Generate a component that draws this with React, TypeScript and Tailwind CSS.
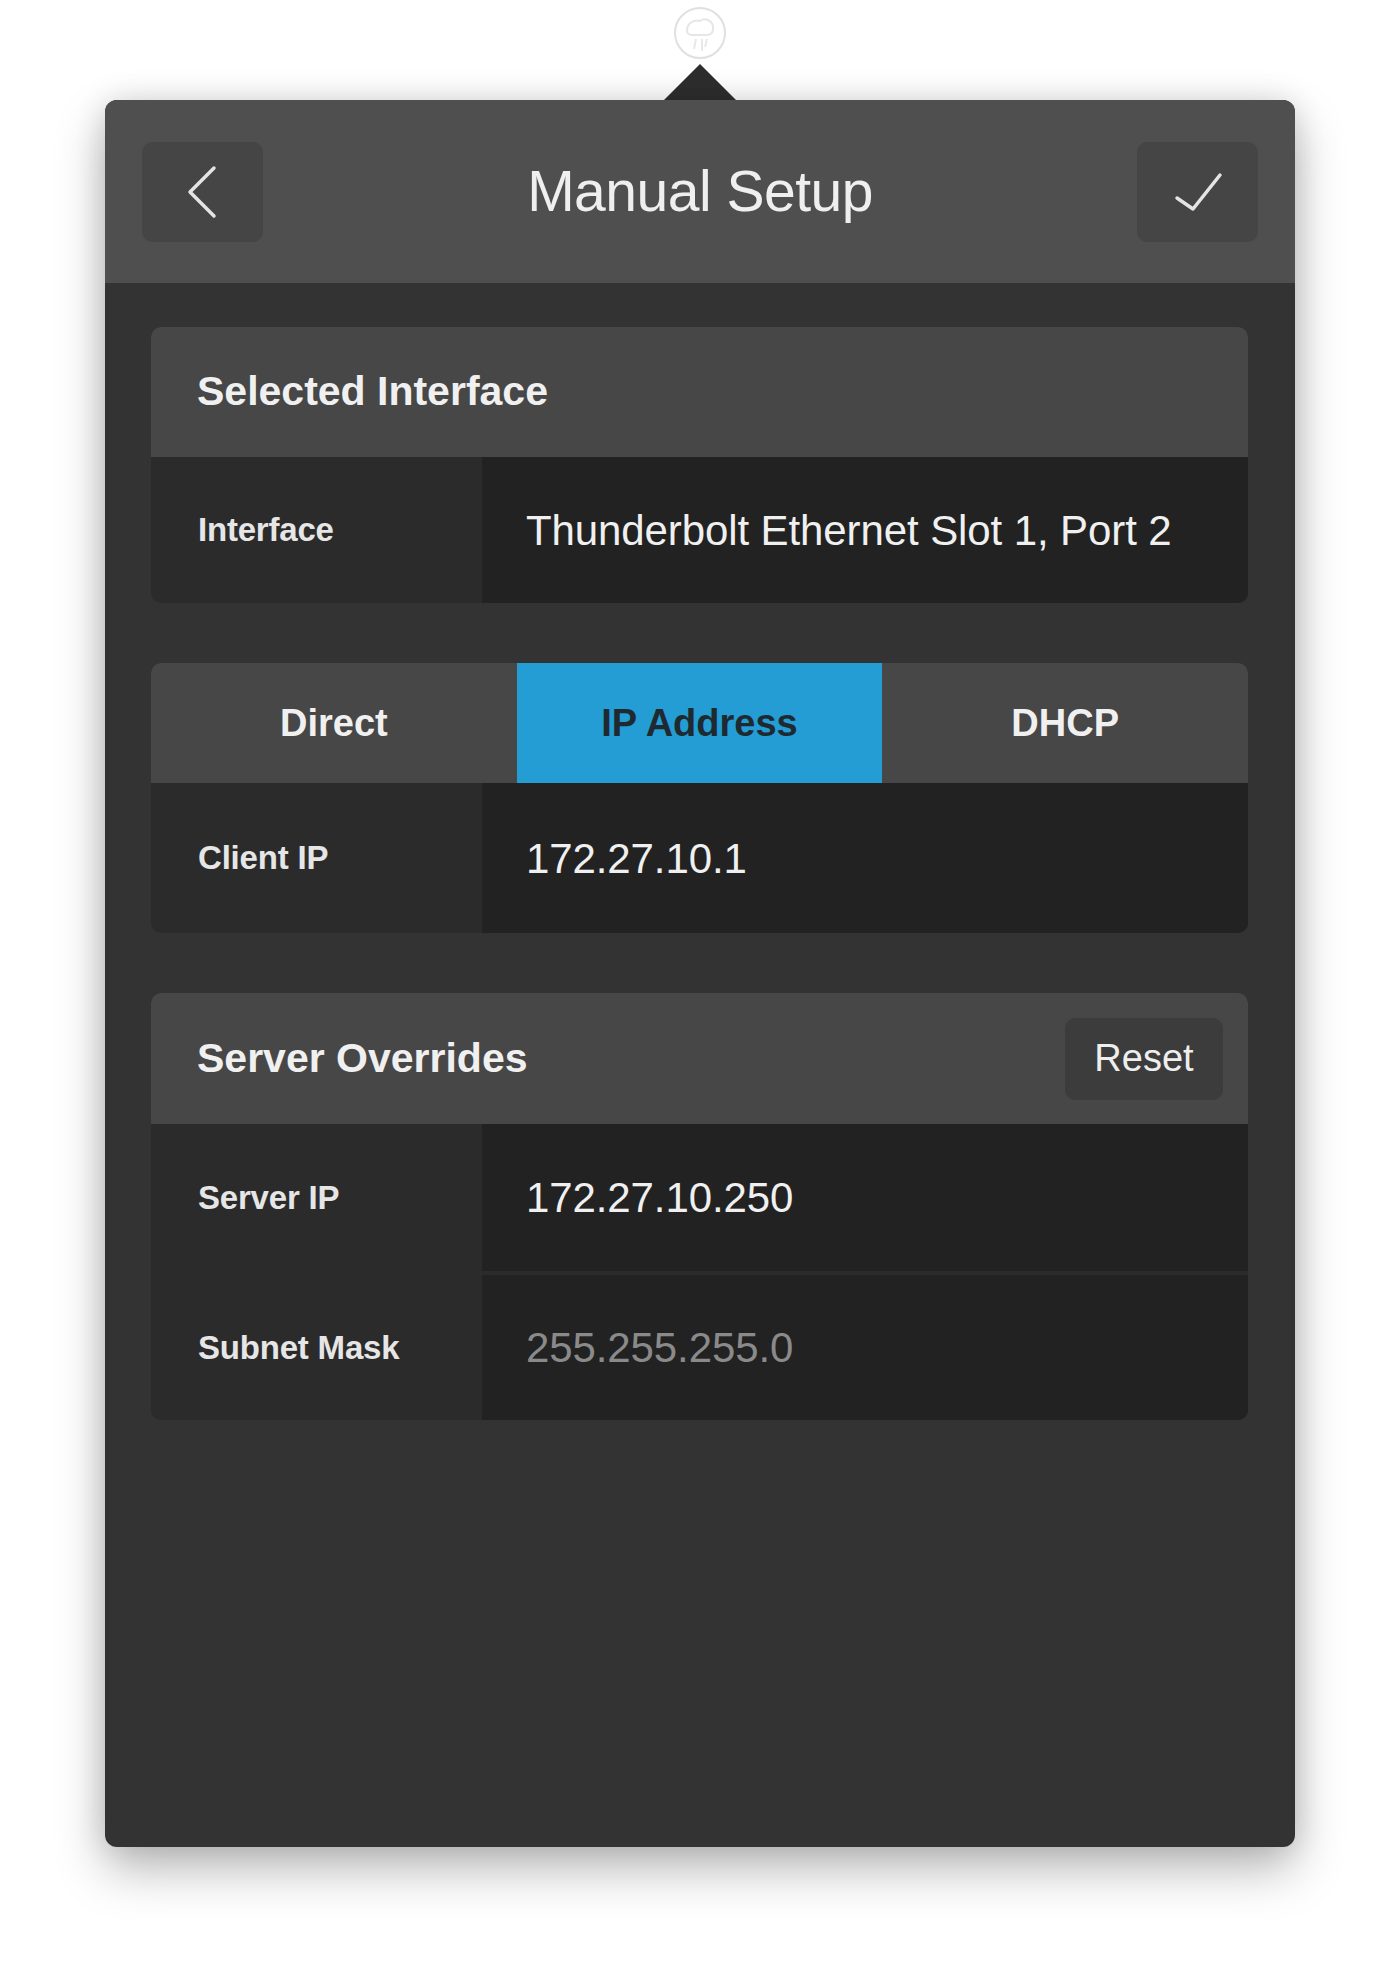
import React from "react";

const font = { fontFamily: '"Liberation Sans", Arial, Helvetica, sans-serif' };

function Row({ label, value, dim }: { label: string; value: string; dim?: boolean }) {
  return (
    <div className="flex h-full">
      <div className="w-[331px] shrink-0 flex items-center pl-[47px] text-[33px] font-bold text-[#e6e6e6] tracking-[-0.2px]">
        {label}
      </div>
      <div
        className={
          "flex-1 flex items-center pl-[44px] bg-[#222222] text-[42px] tracking-[-0.1px] " +
          (dim ? "text-[#8a8a8a]" : "text-[#f0f0f0]")
        }
      >
        {value}
      </div>
    </div>
  );
}

export default function App() {
  return (
    <div className="min-h-[1966px] w-full bg-white flex flex-col items-center pt-[5px]" style={font}>
      <svg width="56" height="56" viewBox="0 0 56 56" className="shrink-0">
        <circle cx="28" cy="28" r="25" fill="none" stroke="#e0e0e0" strokeWidth="2" />
        <path d="M15 26 C15 18 22 14 28 16 C33 12 42 16 41 24 C41 28 38 30 34 30 L20 30 C17 30 15 28 15 26 Z" fill="none" stroke="#e6e6e6" strokeWidth="2" />
        <path d="M24 34 L22 44 M30 34 L30 46 M35 34 L33 42" stroke="#e8e8e8" strokeWidth="2" fill="none" />
      </svg>
      <svg width="72" height="39" viewBox="0 0 72 39" className="shrink-0 block">
        <path d="M36 3 L72 39 L0 39 Z" fill="#2e2e2e" />
      </svg>
      <div className="w-[1190px] h-[1747px] shrink-0 rounded-[12px] bg-[#333333] overflow-hidden shadow-[0_22px_50px_rgba(0,0,0,0.28),0_0_30px_rgba(0,0,0,0.12)] flex flex-col">
        <div className="h-[183px] shrink-0 bg-[#4f4f4f] flex items-center justify-between px-[37px]">
          <div className="w-[121px] h-[100px] rounded-[10px] bg-[#454545] flex items-center justify-center">
            <svg width="60" height="60" viewBox="0 0 60 60">
              <path d="M41 6 L17 30 L41 54" fill="none" stroke="#e4e4e4" strokeWidth="3.5" strokeLinecap="round" strokeLinejoin="round" />
            </svg>
          </div>
          <div className="text-[57px] text-[#efefef] tracking-[-0.5px] leading-none">Manual Setup</div>
          <div className="w-[121px] h-[100px] rounded-[10px] bg-[#454545] flex items-center justify-center">
            <svg width="60" height="60" viewBox="0 0 60 60">
              <path d="M9 36 L25 47 L52 13" fill="none" stroke="#e4e4e4" strokeWidth="3.5" strokeLinecap="round" strokeLinejoin="round" />
            </svg>
          </div>
        </div>

        <div className="flex flex-col gap-[60px] pt-[44px] pl-[46px] pr-[47px]">
          <div className="rounded-[10px] overflow-hidden bg-[#2b2b2b] flex flex-col">
            <div className="h-[130px] bg-[#474747] flex items-center pl-[46px] text-[41px] font-bold text-[#f0f0f0]">
              Selected Interface
            </div>
            <div className="h-[146px]">
              <Row label="Interface" value="Thunderbolt Ethernet Slot 1, Port 2" />
            </div>
          </div>

          <div className="rounded-[10px] overflow-hidden bg-[#2b2b2b] flex flex-col">
            <div className="h-[120px] grid grid-cols-3 bg-[#474747] text-[38px] font-bold">
              <div className="flex items-center justify-center text-[#f0f0f0]">Direct</div>
              <div className="flex items-center justify-center bg-[#249cd4] text-[#1f2a30]">IP Address</div>
              <div className="flex items-center justify-center text-[#f0f0f0]">DHCP</div>
            </div>
            <div className="h-[150px]">
              <Row label="Client IP" value="172.27.10.1" />
            </div>
          </div>

          <div className="rounded-[10px] overflow-hidden bg-[#2b2b2b] flex flex-col">
            <div className="h-[131px] bg-[#474747] flex items-center justify-between pl-[46px] pr-[25px]">
              <div className="text-[41px] font-bold text-[#f0f0f0]">Server Overrides</div>
              <div className="w-[158px] h-[82px] rounded-[10px] bg-[#3c3c3c] flex items-center justify-center text-[38px] text-[#eeeeee]">
                Reset
              </div>
            </div>
            <div className="flex flex-col gap-[4px]">
              <div className="h-[147px]">
                <Row label="Server IP" value="172.27.10.250" />
              </div>
              <div className="h-[145px]">
                <Row label="Subnet Mask" value="255.255.255.0" dim />
              </div>
            </div>
          </div>
        </div>
      </div>
    </div>
  );
}
